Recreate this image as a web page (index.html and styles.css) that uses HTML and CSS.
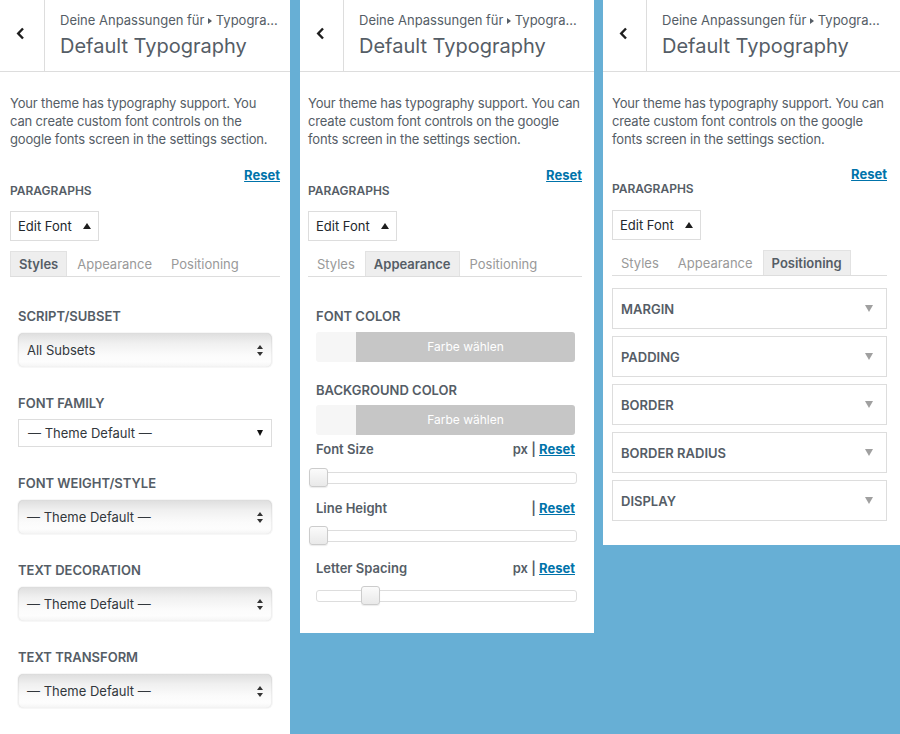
FILE: index.html
```html
<!DOCTYPE html>
<html lang="de">
<head>
  <meta charset="UTF-8" />
  <title>Default Typography</title>
  <link rel="stylesheet" href="styles.css">
</head>
<body>
<div class="screen">

  <!-- Styles tab -->
  <section class="panel panel-styles">
    <header class="head">
      <div class="back">
        <svg width="9" height="13" viewBox="0 0 9 13"><path d="M7 1.5 L2.2 6.5 L7 11.5" fill="none" stroke="#1e1e1e" stroke-width="2.4"/></svg>
      </div>
      <div class="titles">
        <div class="crumb">Deine Anpassungen für <span class="caret-right"></span> Typogra...</div>
        <h1 class="title">Default Typography</h1>
      </div>
    </header>
    <div class="body">
      <p class="desc">Your theme has typography support. You can create custom font controls on the google fonts screen in the settings section.</p>
      <div class="reset-row"><a class="link">Reset</a></div>
      <div class="group-title">Paragraphs</div>
      <button class="edit-font">Edit Font <span class="caret-up"></span></button>
      <div class="tabs">
        <span class="tab is-active">Styles</span>
        <span class="tab">Appearance</span>
        <span class="tab">Positioning</span>
      </div>
      <div class="pane pane-styles">
        <div class="field">
          <div class="field-label">Script/Subset</div>
          <div class="select-mac">All Subsets <span class="updown"></span></div>
        </div>
        <div class="field">
          <div class="field-label">Font Family</div>
          <div class="select-flat">— Theme Default — <span class="caret-down"></span></div>
        </div>
        <div class="field">
          <div class="field-label">Font Weight/Style</div>
          <div class="select-mac">— Theme Default — <span class="updown"></span></div>
        </div>
        <div class="field">
          <div class="field-label">Text Decoration</div>
          <div class="select-mac">— Theme Default — <span class="updown"></span></div>
        </div>
        <div class="field">
          <div class="field-label">Text Transform</div>
          <div class="select-mac">— Theme Default — <span class="updown"></span></div>
        </div>
      </div>
    </div>
  </section>

  <!-- Appearance tab -->
  <section class="panel panel-appearance">
    <header class="head">
      <div class="back">
        <svg width="9" height="13" viewBox="0 0 9 13"><path d="M7 1.5 L2.2 6.5 L7 11.5" fill="none" stroke="#1e1e1e" stroke-width="2.4"/></svg>
      </div>
      <div class="titles">
        <div class="crumb">Deine Anpassungen für <span class="caret-right"></span> Typogra...</div>
        <h1 class="title">Default Typography</h1>
      </div>
    </header>
    <div class="body">
      <p class="desc">Your theme has typography support. You can create custom font controls on the google fonts screen in the settings section.</p>
      <div class="reset-row"><a class="link">Reset</a></div>
      <div class="group-title">Paragraphs</div>
      <button class="edit-font">Edit Font <span class="caret-up"></span></button>
      <div class="tabs">
        <span class="tab">Styles</span>
        <span class="tab is-active">Appearance</span>
        <span class="tab">Positioning</span>
      </div>
      <div class="pane pane-appearance">
        <div class="field-label">Font Color</div>
        <div class="color-btn"><span class="swatch"></span><span class="color-label">Farbe wählen</span></div>
        <div class="field-label second">Background Color</div>
        <div class="color-btn"><span class="swatch"></span><span class="color-label">Farbe wählen</span></div>

        <div class="range-head size"><span>Font Size</span><span class="unit">px | <a class="link">Reset</a></span></div>
        <div class="track first"><span class="thumb" style="left:-8px"></span></div>
        <div class="range-head height"><span>Line Height</span><span class="unit">| <a class="link">Reset</a></span></div>
        <div class="track"><span class="thumb" style="left:-8px"></span></div>
        <div class="range-head spacing"><span>Letter Spacing</span><span class="unit">px | <a class="link">Reset</a></span></div>
        <div class="track"><span class="thumb" style="left:44px"></span></div>
      </div>
    </div>
  </section>

  <!-- Positioning tab -->
  <section class="panel panel-positioning">
    <header class="head">
      <div class="back">
        <svg width="9" height="13" viewBox="0 0 9 13"><path d="M7 1.5 L2.2 6.5 L7 11.5" fill="none" stroke="#1e1e1e" stroke-width="2.4"/></svg>
      </div>
      <div class="titles">
        <div class="crumb">Deine Anpassungen für <span class="caret-right"></span> Typogra...</div>
        <h1 class="title">Default Typography</h1>
      </div>
    </header>
    <div class="body">
      <p class="desc">Your theme has typography support. You can create custom font controls on the google fonts screen in the settings section.</p>
      <div class="reset-row"><a class="link">Reset</a></div>
      <div class="group-title">Paragraphs</div>
      <button class="edit-font">Edit Font <span class="caret-up"></span></button>
      <div class="tabs">
        <span class="tab">Styles</span>
        <span class="tab">Appearance</span>
        <span class="tab is-active">Positioning</span>
      </div>
      <div class="pane pane-positioning">
        <div class="acc-item">Margin <span class="caret-gray"></span></div>
        <div class="acc-item">Padding <span class="caret-gray"></span></div>
        <div class="acc-item">Border <span class="caret-gray"></span></div>
        <div class="acc-item">Border Radius <span class="caret-gray"></span></div>
        <div class="acc-item">Display <span class="caret-gray"></span></div>
      </div>
    </div>
  </section>

</div>
</body>
</html>
```

FILE: styles.css
```css
html, body {
  margin: 0; padding: 0;
  background: #67afd5;
  font-family: Inter, "Noto Sans", sans-serif;
  color: #555d66;
  font-size: 13px;
}
.screen { display: flex; align-items: flex-start; height: 734px; overflow: hidden; }

.panel { background: #fff; box-sizing: border-box; }
.panel-styles { width: 290px; height: 734px; }
.panel-appearance { width: 294px; height: 633px; margin-left: 10px; }
.panel-positioning { width: 297px; height: 545px; margin-left: 9px; }

/* header */
.head { display: flex; height: 71px; border-bottom: 1px solid #ddd; }
.back {
  width: 44px; flex: none; border-right: 1px solid #ddd;
  padding: 27px 0 0 16px; box-sizing: border-box;
}
.panel-styles .back { width: 45px; }
.titles { padding: 11px 0 0 15px; min-width: 0; }
.crumb { font-size: 13px; line-height: 18px; white-space: nowrap; }
.caret-right {
  display: inline-block; vertical-align: 1px;
  border-top: 3px solid transparent; border-bottom: 3px solid transparent;
  border-left: 4px solid #555d66;
}
.title { margin: 4px 0 0; font-size: 20px; line-height: 26px; font-weight: 400; color: #555d66; }

/* body */
.body { padding: 0 10px; }
.panel-appearance .body { padding: 0 12px 0 8px; }
.panel-positioning .body { padding: 0 13px 0 9px; }

.desc { margin: 22px 0 0; line-height: 18px; letter-spacing: -0.15px; }
.reset-row { margin-top: 19px; line-height: 16px; text-align: right; }
.panel-positioning .reset-row { margin-top: 18px; }
.link { color: #0073aa; font-weight: 700; text-decoration: underline; cursor: pointer; }
.group-title { margin-top: 1px; font-size: 12px; line-height: 14px; font-weight: 600; text-transform: uppercase; }
.panel-positioning .group-title { margin-top: 0; }

.edit-font {
  display: flex; align-items: center; gap: 11px;
  margin-top: 13px; height: 30px; padding: 0 7px;
  background: #fff; border: 1px solid #ddd; border-radius: 0;
  font: inherit; font-size: 13px; color: #23282d;
}
.panel-positioning .edit-font { margin-top: 14px; }
.caret-up {
  border-left: 4px solid transparent; border-right: 4px solid transparent;
  border-bottom: 6px solid #1e1e1e;
}

.tabs { display: flex; margin-top: 10px; border-bottom: 1px solid #ddd; height: 25px; }
.tab {
  padding: 0 8px; margin-right: 1px; line-height: 24px;
  border: 1px solid transparent; border-bottom: 0;
  color: #999; font-size: 13px;
}
.tab.is-active { background: #eee; border-color: #e2e2e2; color: #555d66; font-weight: 600; }

/* styles pane */
.pane-styles { padding: 30px 8px 0; }
.field { margin-bottom: 27px; }
.field-label { font-size: 13px; line-height: 18px; font-weight: 600; text-transform: uppercase; margin-bottom: 8px; }
.select-mac {
  display: flex; align-items: center; justify-content: space-between;
  height: 34px; padding: 0 9px; border-radius: 5px; box-sizing: border-box;
  background: linear-gradient(#dedede, #f0f0f0 30%, #fbfbfb 65%, #fdfdfd 85%, #f4f4f4);
  box-shadow: inset 1px 0 1px rgba(0,0,0,0.06), inset -1px 0 1px rgba(0,0,0,0.06), 0 0 0 1px rgba(0,0,0,0.03);
  color: #32373c; font-size: 13px;
}
.updown { position: relative; width: 6px; height: 11px; }
.updown::before, .updown::after {
  content: ""; position: absolute; left: 0;
  border-left: 3px solid transparent; border-right: 3px solid transparent;
}
.updown::before { top: 0; border-bottom: 4px solid #333; }
.updown::after { bottom: 0; border-top: 4px solid #333; }
.select-flat {
  display: flex; align-items: center; justify-content: space-between;
  height: 28px; margin-top: -1px; box-sizing: border-box; padding: 0 8px 0 9px;
  border: 1px solid #ddd; color: #32373c; font-size: 13px;
}
.caret-down {
  border-left: 3.5px solid transparent; border-right: 3.5px solid transparent;
  border-top: 6px solid #111;
}

/* appearance pane */
.pane-appearance { padding: 30px 5px 0 8px; }
.pane-appearance .field-label { margin-bottom: 7px; }
.pane-appearance .field-label.second { margin-top: 19px; margin-bottom: 6px; }
.color-btn { display: flex; height: 30px; margin-right: 2px; border-radius: 3px; overflow: hidden; }
.swatch { width: 40px; background: #f6f6f6; }
.color-label { flex: 1; background: #c6c6c6; color: #fff; font-size: 12px; line-height: 30px; text-align: center; }
.range-head {
  display: flex; justify-content: space-between;
  margin: 15px 2px 0 0; line-height: 18px; font-weight: 600; font-size: 13px;
}
.range-head.size { margin-top: 5px; }
.range-head.spacing { margin-top: 17px; }
.unit { font-weight: 600; }
.track {
  position: relative; margin-top: 13px; height: 12px; box-sizing: border-box;
  border: 1px solid #ddd; border-radius: 3px; background: #fff;
}
.track.first { margin-top: 14px; }
.thumb {
  position: absolute; top: -5px; width: 19px; height: 19px; box-sizing: border-box;
  border: 1px solid #ccc; border-radius: 3px;
  background: linear-gradient(#fbfbfb, #e9e9e9);
  box-shadow: 0 1px 1px rgba(0,0,0,0.08);
}

/* positioning pane */
.pane-positioning { padding-top: 12px; }
.acc-item {
  display: flex; align-items: center; justify-content: space-between;
  height: 41px; box-sizing: border-box; margin-bottom: 7px; padding: 0 13px 0 8px;
  border: 1px solid #ddd; font-weight: 600; text-transform: uppercase; font-size: 13px;
}
.caret-gray {
  border-left: 4px solid transparent; border-right: 4px solid transparent;
  border-top: 7px solid #a0a0a0;
}
```
